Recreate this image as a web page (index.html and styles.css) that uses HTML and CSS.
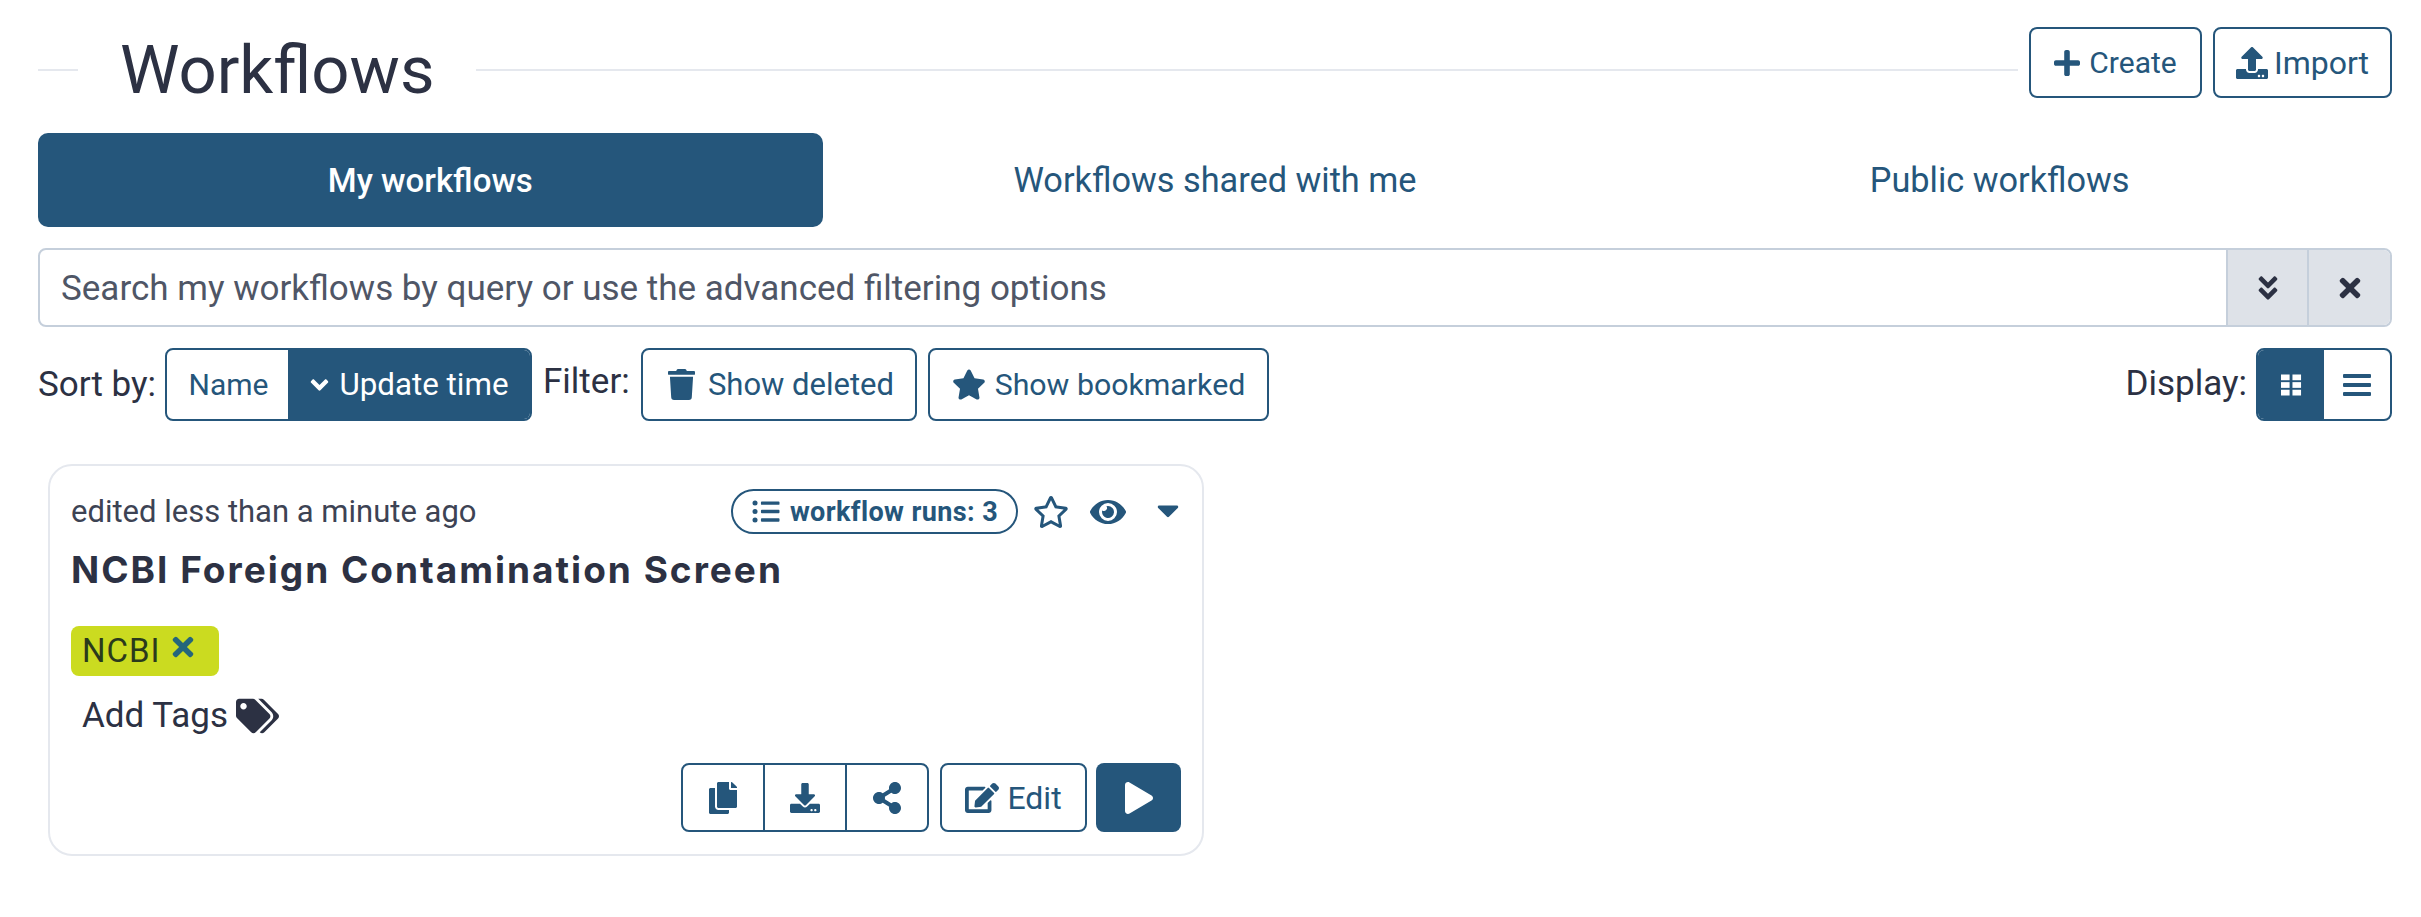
FILE: index.html
```html
<!DOCTYPE html>
<html lang="en">
<head>
	<meta charset="UTF-8">
	<title>Workflows</title>
	<link rel="stylesheet" href="styles.css">
</head>
<body>
	<div class="page">
		<div class="heading">
			<div class="rule rule-short"></div>
			<h1 class="title">Workflows</h1>
			<div class="rule rule-long"></div>
			<div class="btn btn-create">
				<svg class="ico" viewBox="0 0 448 512"><path d="M416 208H272V64c0-17.67-14.33-32-32-32h-32c-17.67 0-32 14.33-32 32v144H32c-17.67 0-32 14.33-32 32v32c0 17.67 14.33 32 32 32h144v144c0 17.67 14.33 32 32 32h32c17.67 0 32-14.33 32-32V304h144c17.67 0 32-14.33 32-32v-32c0-17.67-14.33-32-32-32z"/></svg>
				Create
			</div>
			<div class="btn btn-import">
				<svg class="ico ico-import" viewBox="0 0 512 512"><path d="M296 384h-80c-13.3 0-24-10.7-24-24V192h-87.7c-17.8 0-26.7-21.5-14.1-34.1L242.3 5.7c7.5-7.5 19.8-7.5 27.3 0l152.2 152.2c12.6 12.6 3.7 34.1-14.1 34.1H320v168c0 13.3-10.7 24-24 24zm216-8v112c0 13.3-10.7 24-24 24H24c-13.3 0-24-10.7-24-24V376c0-13.3 10.7-24 24-24h136v8c0 30.9 25.1 56 56 56h80c30.9 0 56-25.1 56-56v-8h136c13.3 0 24 10.7 24 24zm-124 88c0-11-9-20-20-20s-20 9-20 20 9 20 20 20 20-9 20-20zm64 0c0-11-9-20-20-20s-20 9-20 20 9 20 20 20 20-9 20-20z"/></svg>
				Import
			</div>
		</div>

		<div class="tabs">
			<div class="tab tab-active">My workflows</div>
			<div class="tab">Workflows shared with me</div>
			<div class="tab">Public workflows</div>
		</div>

		<div class="search">
			<div class="search-text">Search my workflows by query or use the advanced filtering options</div>
			<div class="search-btn search-btn-more">
				<svg class="ico-search" viewBox="0 0 320 512"><path d="M143 256.3L7 120.3c-9.4-9.4-9.4-24.6 0-33.9l22.6-22.6c9.4-9.4 24.6-9.4 33.9 0l96.4 96.4 96.4-96.4c9.4-9.4 24.6-9.4 33.9 0L313 86.3c9.4 9.4 9.4 24.6 0 33.9l-136 136c-9.4 9.5-24.6 9.5-34 .1zm34 192l136-136c9.4-9.4 9.4-24.6 0-33.9l-22.6-22.6c-9.4-9.4-24.6-9.4-33.9 0L160 352.1l-96.4-96.4c-9.4-9.4-24.6-9.4-33.9 0L7 278.3c-9.4 9.4-9.4 24.6 0 33.9l136 136c9.4 9.5 24.6 9.5 34 .1z"/></svg>
			</div>
			<div class="search-btn">
				<svg class="ico-search" viewBox="0 0 352 512"><path d="M242.72 256l100.07-100.07c12.28-12.28 12.28-32.19 0-44.48l-22.24-22.24c-12.28-12.28-32.19-12.28-44.48 0L176 189.28 75.93 89.21c-12.28-12.28-32.19-12.28-44.48 0L9.21 111.45c-12.28 12.28-12.28 32.19 0 44.48L109.28 256 9.21 356.07c-12.28 12.28-12.28 32.19 0 44.48l22.24 22.24c12.28 12.28 32.2 12.28 44.48 0L176 322.72l100.07 100.07c12.28 12.28 32.2 12.28 44.48 0l22.24-22.24c12.28-12.28 12.28-32.19 0-44.48L242.72 256z"/></svg>
			</div>
		</div>

		<div class="toolbar">
			<span class="label label-sort">Sort by:</span>
			<div class="group group-sort">
				<div class="seg seg-name">Name</div>
				<div class="seg seg-on seg-time">
					<svg class="ico-angle" viewBox="0 0 320 512"><path d="M143 352.3L7 216.3c-9.4-9.4-9.4-24.6 0-33.9l22.6-22.6c9.4-9.4 24.6-9.4 33.9 0l96.4 96.4 96.4-96.4c9.4-9.4 24.6-9.4 33.9 0l22.6 22.6c9.4 9.4 9.4 24.6 0 33.9l-136 136c-9.2 9.4-24.4 9.4-33.8 0z"/></svg>
					Update time
				</div>
			</div>
			<span class="label label-filter">Filter:</span>
			<div class="btn btn-deleted">
				<svg class="ico ico-trash" viewBox="0 0 448 512"><path d="M432 32H312l-9.4-18.7A24 24 0 0 0 281.1 0H166.8a23.72 23.72 0 0 0-21.4 13.3L136 32H16A16 16 0 0 0 0 48v32a16 16 0 0 0 16 16h416a16 16 0 0 0 16-16V48a16 16 0 0 0-16-16zM53.2 467a48 48 0 0 0 47.9 45h245.8a48 48 0 0 0 47.9-45L416 128H32z"/></svg>
				Show deleted
			</div>
			<div class="btn btn-bookmarked">
				<svg class="ico ico-bigstar" viewBox="0 0 576 512"><path d="M259.3 17.8L194 150.2 47.9 171.5c-26.2 3.8-36.7 36.1-17.7 54.6l105.7 103-25 145.5c-4.5 26.3 23.2 46 46.4 33.7L288 439.6l130.7 68.7c23.2 12.2 50.9-7.4 46.4-33.7l-25-145.5 105.7-103c19-18.5 8.5-50.8-17.7-54.6L382 150.2 316.7 17.8c-11.7-23.6-45.6-23.9-57.4 0z"/></svg>
				Show bookmarked
			</div>
			<div class="spacer"></div>
			<span class="label label-display">Display:</span>
			<div class="group group-display">
				<div class="seg seg-on seg-view">
					<svg class="ico-view" viewBox="0 0 22 22"><rect x="0" y="0" width="9" height="6"/><rect x="12" y="0" width="9" height="6"/><rect x="0" y="8" width="9" height="6"/><rect x="12" y="8" width="9" height="6"/><rect x="0" y="16" width="9" height="6"/><rect x="12" y="16" width="9" height="6"/></svg>
				</div>
				<div class="seg seg-view">
					<svg class="ico-view ico-lines" viewBox="0 0 28 22"><rect x="0" y="0" width="28" height="4" rx="1"/><rect x="0" y="9" width="28" height="4" rx="1"/><rect x="0" y="18" width="28" height="4" rx="1"/></svg>
				</div>
			</div>
		</div>

		<div class="card">
			<div class="card-top">
				<span class="edited">edited less than a minute ago</span>
				<div class="spacer"></div>
				<div class="runs">
					<svg class="ico-list" viewBox="0 0 512 512"><path d="M48 48a48 48 0 1 0 48 48 48 48 0 0 0-48-48zm0 160a48 48 0 1 0 48 48 48 48 0 0 0-48-48zm0 160a48 48 0 1 0 48 48 48 48 0 0 0-48-48zm448 16H176a16 16 0 0 0-16 16v32a16 16 0 0 0 16 16h320a16 16 0 0 0 16-16v-32a16 16 0 0 0-16-16zm0-320H176a16 16 0 0 0-16 16v32a16 16 0 0 0 16 16h320a16 16 0 0 0 16-16V80a16 16 0 0 0-16-16zm0 160H176a16 16 0 0 0-16 16v32a16 16 0 0 0 16 16h320a16 16 0 0 0 16-16v-32a16 16 0 0 0-16-16z"/></svg>
					workflow runs: 3
				</div>
				<svg class="ico-star" viewBox="0 0 576 512"><path d="M528.1 171.5L382 150.2 316.7 17.8c-11.7-23.6-45.6-23.9-57.4 0L194 150.2 47.9 171.5c-26.2 3.8-36.7 36.1-17.7 54.6l105.7 103-25 145.5c-4.5 26.3 23.2 46 46.4 33.7L288 439.6l130.7 68.7c23.2 12.2 50.9-7.4 46.4-33.7l-25-145.5 105.7-103c19-18.5 8.5-50.8-17.7-54.6zM388.6 312.3l23.7 138.4L288 385.4l-124.3 65.3 23.7-138.4-100.6-98 139-20.2 62.2-126 62.2 126 139 20.2-100.6 98z"/></svg>
				<svg class="ico-eye" viewBox="0 0 576 512"><path d="M572.52 241.4C518.29 135.59 410.93 64 288 64S57.68 135.64 3.48 241.41a32.35 32.35 0 0 0 0 29.19C57.71 376.41 165.07 448 288 448s230.32-71.64 284.52-177.41a32.35 32.35 0 0 0 0-29.19zM288 400a144 144 0 1 1 144-144 143.93 143.93 0 0 1-144 144zm0-240a95.31 95.31 0 0 0-25.31 3.79 47.85 47.85 0 0 1-66.9 66.9A95.78 95.78 0 1 0 288 160z"/></svg>
				<svg class="ico-caret" viewBox="0 0 320 512"><path d="M31.3 192h257.3c17.8 0 26.7 21.5 14.1 34.1L174.1 354.8c-7.8 7.8-20.5 7.8-28.3 0L17.2 226.1C4.6 213.5 13.5 192 31.3 192z"/></svg>
			</div>
			<div class="card-title">NCBI Foreign Contamination Screen</div>
			<div class="tag">
				NCBI
				<svg class="ico-x" viewBox="0 0 352 512"><path d="M242.72 256l100.07-100.07c12.28-12.28 12.28-32.19 0-44.48l-22.24-22.24c-12.28-12.28-32.19-12.28-44.48 0L176 189.28 75.93 89.21c-12.28-12.28-32.19-12.28-44.48 0L9.21 111.45c-12.28 12.28-12.28 32.19 0 44.48L109.28 256 9.21 356.07c-12.28 12.28-12.28 32.19 0 44.48l22.24 22.24c12.28 12.28 32.2 12.28 44.48 0L176 322.72l100.07 100.07c12.28 12.28 32.2 12.28 44.48 0l22.24-22.24c12.28-12.28 12.28-32.19 0-44.48L242.72 256z"/></svg>
			</div>
			<div class="addtags">
				Add Tags
				<svg class="ico-tags" viewBox="0 0 640 512"><path d="M497.941 225.941L286.059 14.059A48 48 0 0 0 252.118 0H48C21.49 0 0 21.49 0 48v204.118a48 48 0 0 0 14.059 33.941l211.882 211.882c18.744 18.745 49.136 18.746 67.882 0l204.118-204.118c18.745-18.745 18.745-49.137 0-67.882zM112 160c-26.51 0-48-21.49-48-48s21.49-48 48-48 48 21.49 48 48-21.49 48-48 48zm513.941 133.823L421.823 497.941c-18.745 18.745-49.137 18.745-67.882 0l-.36-.36L527.64 323.522c16.999-16.999 26.36-39.6 26.36-63.64s-9.362-46.641-26.36-63.64L331.397 0h48.721a48 48 0 0 1 33.941 14.059l211.882 211.882c18.745 18.745 18.745 49.137 0 67.882z"/></svg>
			</div>
			<div class="card-actions">
				<div class="group group-actions">
					<div class="seg seg-act">
						<svg class="ico-act" viewBox="0 0 448 512"><path d="M320 448v40c0 13.255-10.745 24-24 24H24c-13.255 0-24-10.745-24-24V120c0-13.255 10.745-24 24-24h72v296c0 30.879 25.121 56 56 56h168zm0-344V0H152c-13.255 0-24 10.745-24 24v368c0 13.255 10.745 24 24 24h272c13.255 0 24-10.745 24-24V128H344c-13.2 0-24-10.8-24-24zm120.971-31.029L375.029 7.029A24 24 0 0 0 358.059 0H352v96h96v-6.059a24 24 0 0 0-7.029-16.97z"/></svg>
					</div>
					<div class="seg seg-act">
						<svg class="ico-act" viewBox="0 0 512 512"><path d="M216 0h80c13.3 0 24 10.7 24 24v168h87.7c17.8 0 26.7 21.5 14.1 34.1L269.7 378.3c-7.5 7.5-19.8 7.5-27.3 0L90.1 226.1c-12.6-12.6-3.7-34.1 14.1-34.1H192V24c0-13.3 10.7-24 24-24zm296 376v112c0 13.3-10.7 24-24 24H24c-13.3 0-24-10.7-24-24V376c0-13.3 10.7-24 24-24h146.7l49 49c20.1 20.1 52.5 20.1 72.6 0l49-49H488c13.3 0 24 10.7 24 24zm-124 88c0-11-9-20-20-20s-20 9-20 20 9 20 20 20 20-9 20-20zm64 0c0-11-9-20-20-20s-20 9-20 20 9 20 20 20 20-9 20-20z"/></svg>
					</div>
					<div class="seg seg-act">
						<svg class="ico-act" viewBox="0 0 448 512"><path d="M352 320c-22.608 0-43.387 7.819-59.79 20.895l-102.486-64.054a96.551 96.551 0 0 0 0-41.683l102.486-64.054C308.613 184.181 329.392 192 352 192c53.019 0 96-42.981 96-96S405.019 0 352 0s-96 42.981-96 96c0 7.158.79 14.13 2.276 20.841L155.79 180.895C139.387 167.819 118.608 160 96 160c-53.019 0-96 42.981-96 96s42.981 96 96 96c22.608 0 43.387-7.819 59.79-20.895l102.486 64.054A96.301 96.301 0 0 0 256 416c0 53.019 42.981 96 96 96s96-42.981 96-96-42.981-96-96-96z"/></svg>
					</div>
				</div>
				<div class="btn btn-edit">
					<svg class="ico ico-edit" viewBox="0 0 576 512"><path d="M402.6 83.2l90.2 90.2c3.8 3.8 3.8 10 0 13.8L274.4 405.6l-92.8 10.3c-12.4 1.4-22.9-9.1-21.5-21.5l10.3-92.8L388.8 83.2c3.8-3.8 10-3.8 13.8 0zm162-22.9l-48.8-48.8c-15.2-15.2-39.9-15.2-55.2 0l-35.4 35.4c-3.8 3.8-3.8 10 0 13.8l90.2 90.2c3.8 3.8 10 3.8 13.8 0l35.4-35.4c15.2-15.3 15.2-40 0-55.2zM384 346.2V448H64V128h229.8c3.2 0 6.2-1.3 8.5-3.5l40-40c7.6-7.6 2.2-20.5-8.5-20.5H48C21.5 64 0 85.5 0 112v352c0 26.5 21.5 48 48 48h352c26.5 0 48-21.5 48-48V306.2c0-10.7-12.9-16-20.5-8.5l-40 40c-2.2 2.3-3.5 5.3-3.5 8.5z"/></svg>
					Edit
				</div>
				<div class="btn-play">
					<svg class="ico-play" viewBox="0 0 448 512"><path d="M424.4 214.7L72.4 6.6C43.8-10.3 0 6.1 0 47.9V464c0 37.5 40.7 60.1 72.4 41.3l352-208c31.4-18.5 31.5-64.1 0-82.6z"/></svg>
				</div>
			</div>
		</div>
	</div>
</body>
</html>
```

FILE: styles.css
```css
*{
	box-sizing: border-box;
	font-family: Roboto, "Noto Sans", sans-serif;
}
body{
	margin: 0;
	background: #fff;
	color: #2c3143;
}
svg{
	fill: currentColor;
	display: block;
	flex-shrink: 0;
}
.page{
	width: 2421px;
	padding: 27px 29px 0 38px;
}
.spacer{
	flex-grow: 1;
}

/* heading */
.heading{
	display: flex;
	align-items: center;
	height: 71px;
}
.rule{
	height: 2px;
	background: #e5e8ee;
	margin-top: 15px;
}
.rule-short{
	width: 40px;
}
.rule-long{
	flex-grow: 1;
	margin-right: 11px;
}
.title{
	margin: 14px 41px 0 42px;
	font-size: 67px;
	font-weight: 400;
	line-height: 70px;
	color: #2c3143;
	white-space: nowrap;
}

/* buttons */
.btn{
	display: flex;
	align-items: center;
	justify-content: center;
	gap: 9px;
	height: 71px;
	border: 2px solid #25567b;
	border-radius: 8px;
	color: #25567b;
	background: #fff;
	font-size: 31px;
	white-space: nowrap;
}
.ico{
	width: 26px;
	height: 30px;
}
.btn-create{
	width: 173px;
	font-size: 30px;
}
.btn-import{
	width: 179px;
	margin-left: 11px;
	gap: 6px;
	font-size: 32px;
}
.ico-import{
	width: 32px;
	height: 32px;
}

/* tabs */
.tabs{
	display: grid;
	grid-template-columns: repeat(3, 1fr);
	margin-top: 35px;
}
.tab{
	height: 94px;
	display: flex;
	align-items: center;
	justify-content: center;
	font-size: 34.3px;
	color: #25567b;
	border-radius: 10px;
}
.tab-active{
	background: #25567b;
	color: #fff;
	font-size: 33px;
	font-weight: 500;
}

/* search */
.search{
	display: flex;
	height: 79px;
	margin-top: 21px;
	border: 2px solid #c5cfdb;
	border-radius: 8px;
	overflow: hidden;
}
.search-text{
	flex-grow: 1;
	display: flex;
	align-items: center;
	padding-left: 21px;
	padding-top: 2px;
	font-size: 35px;
	color: #4f5666;
}
.search-btn{
	width: 83px;
	display: flex;
	align-items: center;
	justify-content: center;
	background: #dee2e8;
	border-left: 2px solid #c5cfdb;
	color: #2c3143;
}
.search-btn-more{
	width: 81px;
}
.ico-search{
	width: 22px;
	height: 30px;
}

/* sort and filter row */
.toolbar{
	display: flex;
	align-items: center;
	height: 73px;
	margin-top: 21px;
}
.label{
	font-size: 35px;
	color: #2c3143;
	white-space: nowrap;
}
.label-sort{
	width: 127px;
}
.label-filter{
	width: 98px;
	margin-left: 11px;
	margin-top: -7px;
}
.label-display{
	margin-right: 9px;
	margin-top: -3px;
}
.group{
	display: flex;
	height: 100%;
	border: 2px solid #25567b;
	border-radius: 8px;
	overflow: hidden;
	background: #fff;
}
.seg{
	display: flex;
	align-items: center;
	justify-content: center;
	color: #25567b;
	font-size: 30px;
	white-space: nowrap;
}
.seg-on{
	background: #25567b;
	color: #fff;
}
.seg-name{
	width: 121px;
	padding-left: 2px;
}
.seg-time{
	width: 242px;
	gap: 9px;
	font-size: 31.3px;
}
.ico-angle{
	width: 21px;
	height: 28px;
}
.btn-deleted{
	width: 276px;
	height: 73px;
	gap: 13px;
	padding-left: 4px;
}
.ico-trash{
	width: 27px;
	height: 31px;
}
.btn-bookmarked{
	width: 341px;
	height: 73px;
	margin-left: 11px;
	gap: 9px;
	font-size: 30.3px;
}
.ico-bigstar{
	width: 34px;
	height: 31px;
}
.group-display{
	width: 136px;
}
.seg-view{
	width: 50%;
}
.ico-view{
	width: 21px;
	height: 22px;
}
.ico-lines{
	width: 28px;
}

/* card */
.card{
	width: 1156px;
	height: 392px;
	margin-top: 43px;
	margin-left: 10px;
	border: 2px solid #e5e8ee;
	border-radius: 24px;
	padding: 23px 21px 0;
}
.card-top{
	display: flex;
	align-items: center;
	height: 45px;
}
.edited{
	font-size: 31px;
	color: #3d4354;
}
.runs{
	display: flex;
	align-items: center;
	gap: 9px;
	width: 287px;
	height: 45px;
	justify-content: center;
	border: 2px solid #25567b;
	border-radius: 23px;
	color: #25567b;
	font-size: 27px;
	font-weight: 700;
	letter-spacing: 0.4px;
}
.ico-list{
	width: 30px;
	height: 27px;
}
.ico-star{
	width: 36px;
	height: 32px;
	margin-left: 15px;
	color: #25567b;
}
.ico-eye{
	width: 36px;
	height: 32px;
	margin-left: 21px;
	color: #25567b;
}
.ico-caret{
	width: 22px;
	height: 36px;
	margin-left: 31px;
	margin-right: 2px;
	margin-top: -4px;
	color: #25567b;
}
.card-title{
	font-family: Inter, Roboto, sans-serif;
	font-size: 37px;
	font-weight: 700;
	letter-spacing: 2px;
	margin-top: 14px;
	line-height: 44px;
	color: #2c3143;
	white-space: nowrap;
}
.tag{
	display: flex;
	align-items: center;
	gap: 11px;
	width: 148px;
	height: 50px;
	margin-top: 34px;
	padding-left: 11px;
	padding-bottom: 2px;
	background: #cbdb20;
	border-radius: 8px;
	font-size: 33px;
	letter-spacing: 1px;
	color: #2a3a1c;
}
.ico-x{
	width: 22px;
	height: 30px;
	margin-top: -7px;
	color: #25667b;
}
.addtags{
	display: flex;
	align-items: center;
	gap: 8px;
	margin-top: 19px;
	padding-left: 11px;
	font-size: 35px;
	color: #2c3143;
	line-height: 42px;
}
.ico-tags{
	width: 43px;
	height: 36px;
}
.card-actions{
	display: flex;
	justify-content: flex-end;
	margin-top: 26px;
	height: 69px;
}
.group-actions{
	width: 248px;
}
.seg-act{
	flex: 1;
	border-left: 2px solid #25567b;
}
.seg-act:first-child{
	border-left: none;
}
.ico-act{
	width: 30px;
	height: 32px;
}
.btn-edit{
	width: 147px;
	height: 69px;
	margin-left: 11px;
	gap: 8px;
	font-size: 32px;
}
.ico-edit{
	width: 34px;
	height: 32px;
}
.btn-play{
	width: 85px;
	height: 69px;
	margin-left: 9px;
	display: flex;
	align-items: center;
	justify-content: center;
	background: #25567b;
	border-radius: 8px;
	color: #fff;
}
.ico-play{
	width: 28px;
	height: 32px;
}
```
